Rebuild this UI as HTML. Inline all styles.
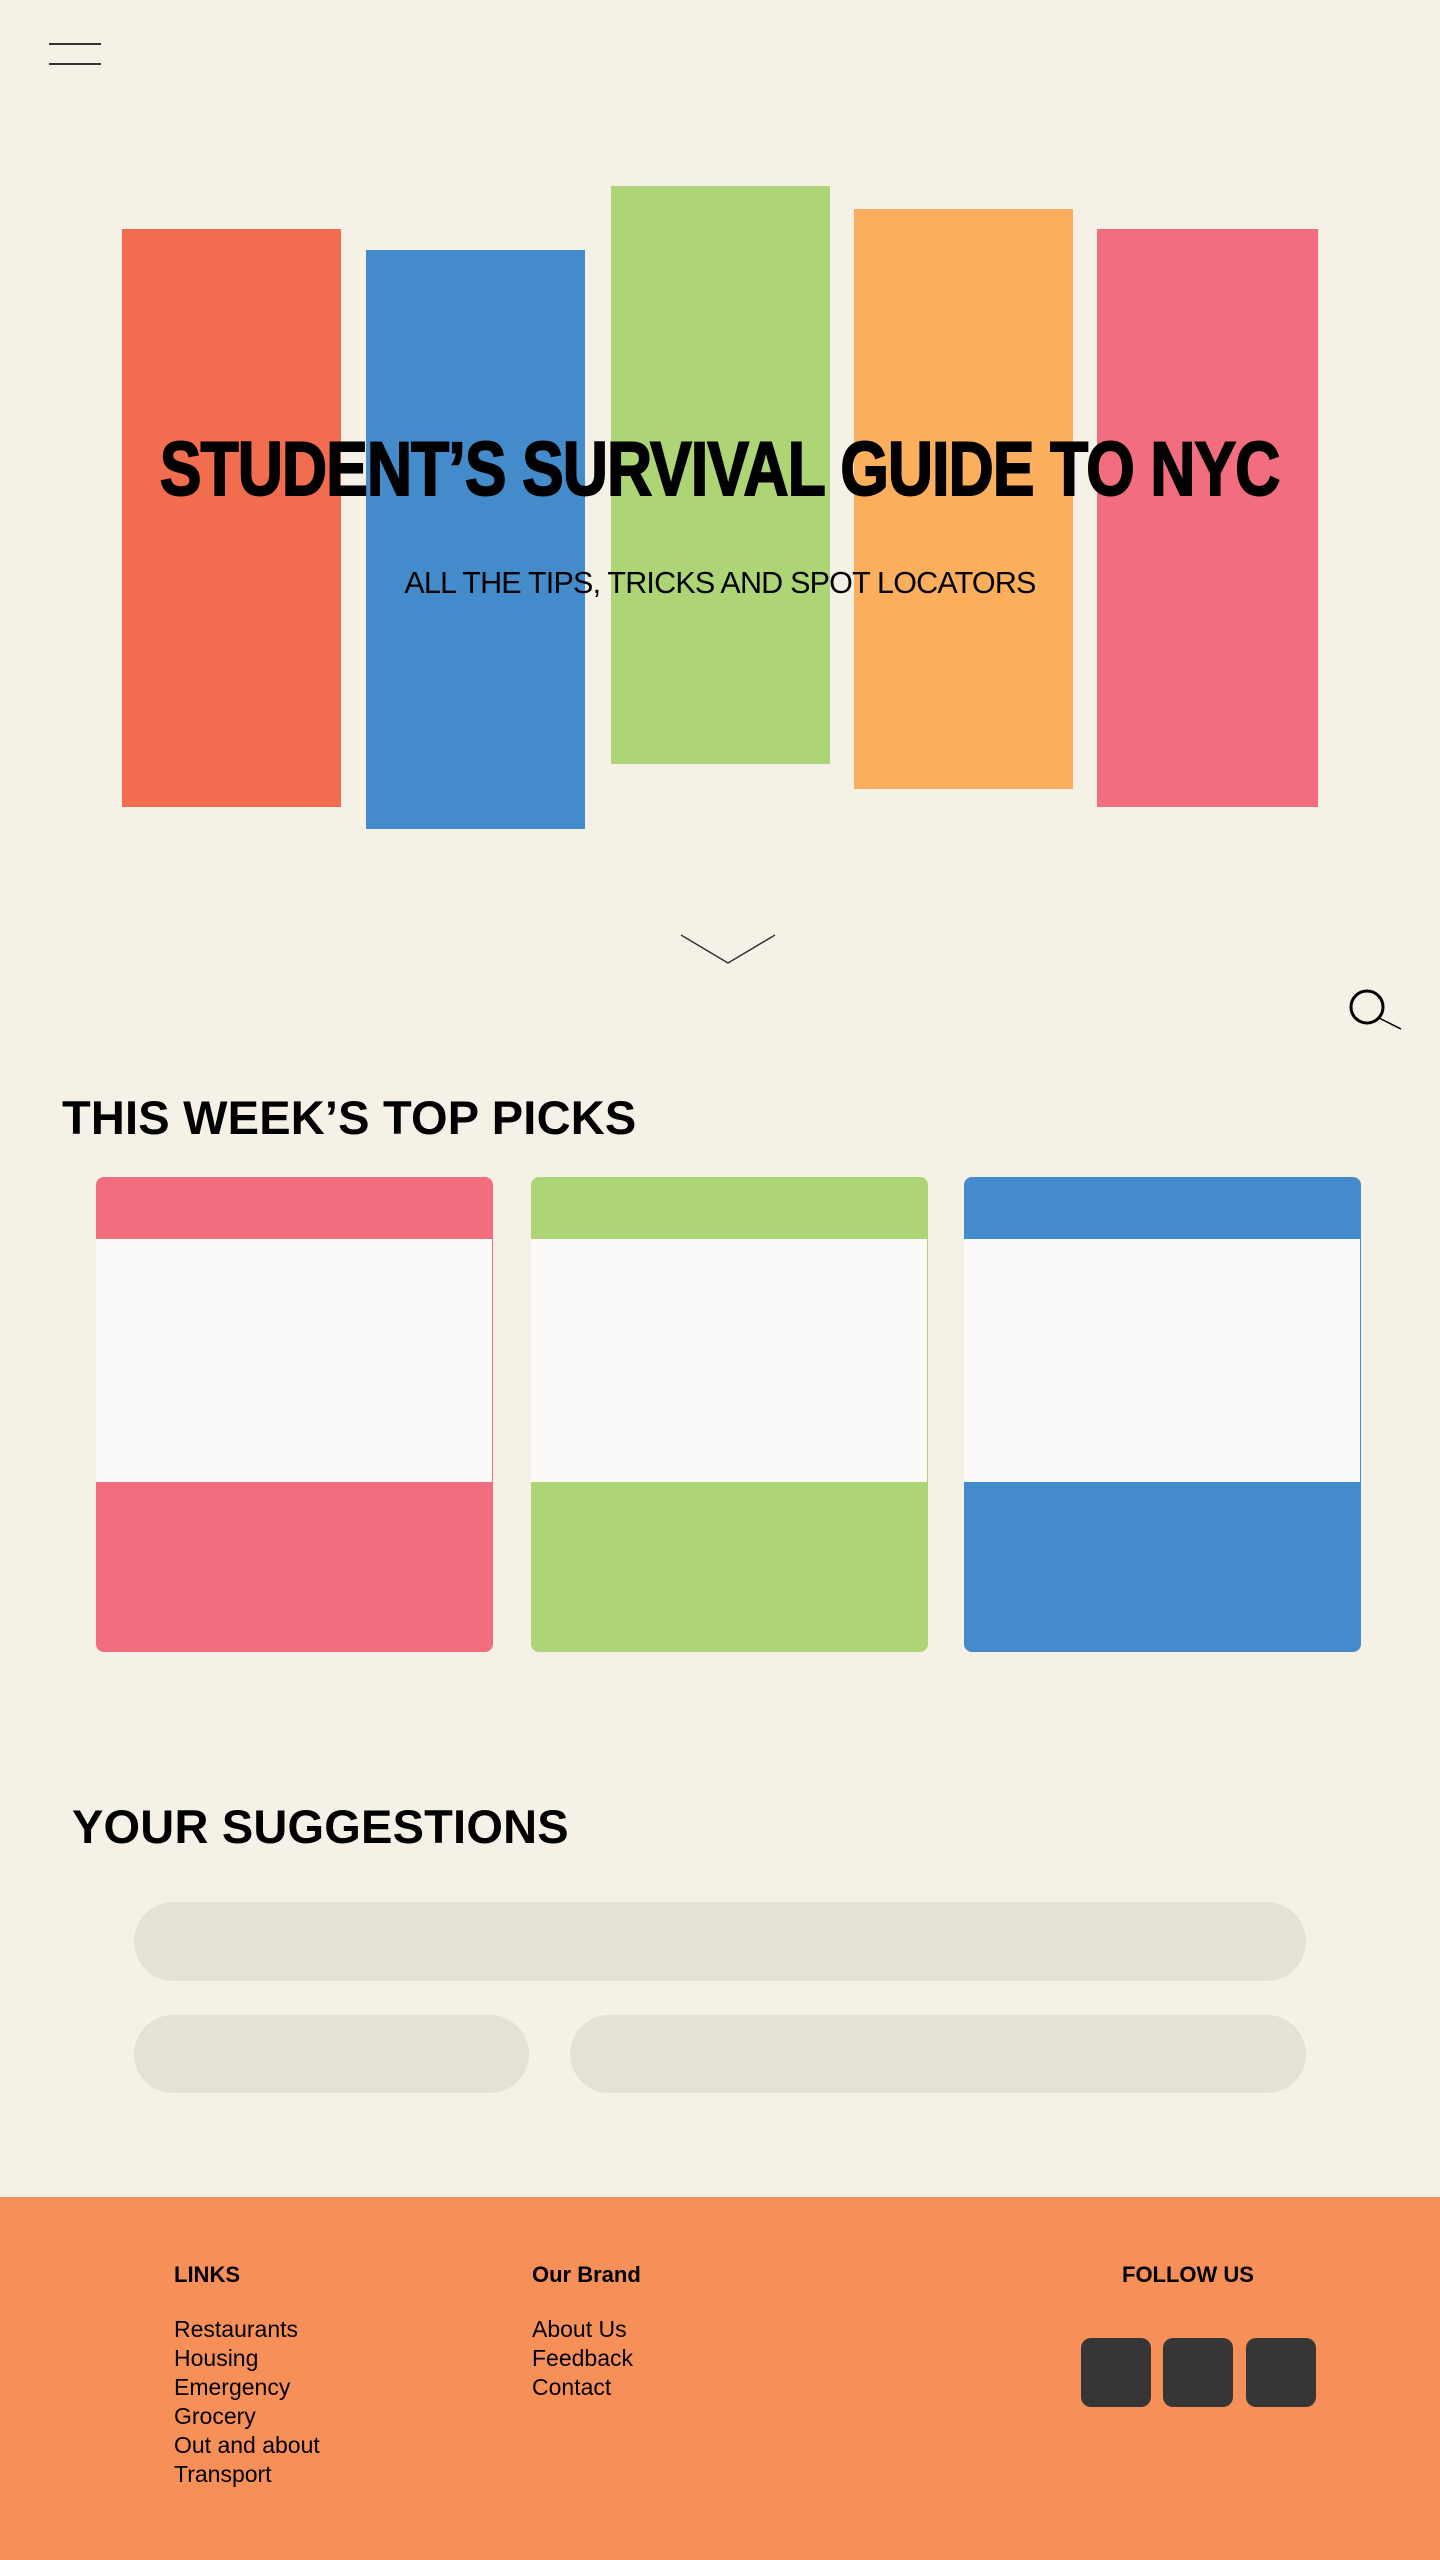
<!DOCTYPE html>
<html><head><meta charset="utf-8"><style>
*{margin:0;padding:0;box-sizing:border-box}
body{width:1440px;height:2560px;background:#f5f1e6;position:relative;overflow:hidden;font-family:"Liberation Sans",sans-serif;color:#000}
.a{position:absolute}
.bar{position:absolute}
.t{position:absolute;white-space:nowrap}
.card{position:absolute;top:1177px;width:397px;height:475px;border-radius:8px;overflow:hidden}
.card .w{position:absolute;left:0;right:1px;top:62px;height:243px;background:#fbfaf8}
.pill{position:absolute;background:#e6e1d6;border-radius:40px}
.ft{font-size:23px;line-height:29px}
.sq{position:absolute;top:2338px;width:70px;height:69px;background:#363636;border-radius:10px}
</style></head><body>
<div class="a" style="left:49px;top:43px;width:52px;height:1.5px;background:#333"></div>
<div class="a" style="left:49px;top:63px;width:52px;height:1.5px;background:#333"></div>

<div class="bar" style="left:122px;top:229px;width:219px;height:578px;background:#f26c4f"></div>
<div class="bar" style="left:366px;top:250px;width:219px;height:579px;background:#448bcb"></div>
<div class="bar" style="left:611px;top:186px;width:219px;height:578px;background:#add575"></div>
<div class="bar" style="left:854px;top:209px;width:219px;height:580px;background:#fbaf5d"></div>
<div class="bar" style="left:1097px;top:229px;width:221px;height:578px;background:#f26d7d"></div>

<div class="t" style="left:0;top:425px;width:1440px;text-align:center;font-size:76px;font-weight:900;line-height:90px"><span style="display:inline-block;letter-spacing:-1px;-webkit-text-stroke:2px #000;transform:scaleX(0.82)">STUDENT’S SURVIVAL GUIDE TO NYC</span></div>
<div class="t" style="left:0;top:565px;width:1440px;text-align:center;font-size:30.5px;line-height:36px;letter-spacing:-0.8px">ALL THE TIPS, TRICKS AND SPOT LOCATORS</div>

<svg class="a" style="left:675px;top:928px" width="106" height="42"><polyline points="6,7 53,35 100,7" fill="none" stroke="#333" stroke-width="1.5"/></svg>
<svg class="a" style="left:1345px;top:985px" width="60" height="50"><circle cx="22" cy="22" r="16" fill="none" stroke="#000" stroke-width="3"/><line x1="34" y1="33" x2="56" y2="44" stroke="#000" stroke-width="1.5"/></svg>

<div class="t" style="left:62px;top:1090px;font-size:47px;font-weight:bold;line-height:56px;letter-spacing:0.2px">THIS WEEK’S TOP PICKS</div>

<div class="card" style="left:96px;background:#f26d7d"><div class="w"></div></div>
<div class="card" style="left:531px;background:#add575"><div class="w"></div></div>
<div class="card" style="left:964px;background:#448bcb"><div class="w"></div></div>

<div class="t" style="left:72px;top:1799px;font-size:47px;font-weight:bold;line-height:56px;letter-spacing:0.2px">YOUR SUGGESTIONS</div>

<div class="pill" style="left:134px;top:1902px;width:1172px;height:79px"></div>
<div class="pill" style="left:134px;top:2015px;width:395px;height:78px"></div>
<div class="pill" style="left:570px;top:2015px;width:736px;height:78px"></div>

<div class="a" style="left:0;top:2197px;width:1440px;height:363px;background:#f78f58"></div>
<div class="t ft" style="left:174px;top:2260px;font-weight:bold;font-size:22px">LINKS</div>
<div class="t ft" style="left:532px;top:2260px;font-weight:bold;font-size:22px">Our Brand</div>
<div class="t ft" style="left:1122px;top:2260px;font-weight:bold;font-size:22px">FOLLOW US</div>
<div class="t ft" style="left:174px;top:2315px">Restaurants<br>Housing<br>Emergency<br>Grocery<br>Out and about<br>Transport</div>
<div class="t ft" style="left:532px;top:2315px">About Us<br>Feedback<br>Contact</div>
<div class="sq" style="left:1081px"></div>
<div class="sq" style="left:1163px"></div>
<div class="sq" style="left:1246px"></div>
</body></html>
